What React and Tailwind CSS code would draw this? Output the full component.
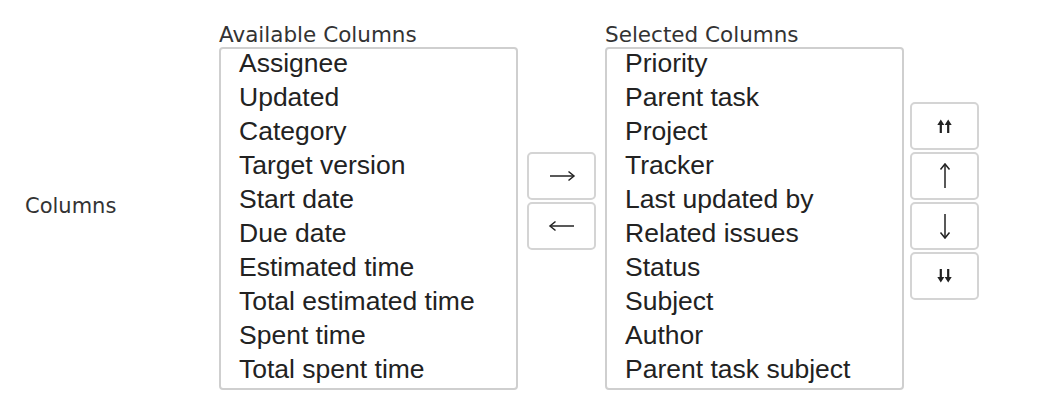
import {useState} from "react";

const available = [
    "Assignee",
    "Updated",
    "Category",
    "Target version",
    "Start date",
    "Due date",
    "Estimated time",
    "Total estimated time",
    "Spent time",
    "Total spent time",
];

const selected = [
    "Priority",
    "Parent task",
    "Project",
    "Tracker",
    "Last updated by",
    "Related issues",
    "Status",
    "Subject",
    "Author",
    "Parent task subject",
];

// thin arrow with an open chevron head, pointing right; rotated for other directions
const Arrow = ({rotate = 0}) => (
    <svg width="28" height="28" viewBox="0 0 28 28" style={{transform: `rotate(${rotate}deg)`}}>
        <path d="M2 14H26" stroke="#222" strokeWidth="1.5" fill="none" />
        <path d="M20.5 9.5L26 14L20.5 18.5" stroke="#222" strokeWidth="1.5" fill="none" />
    </svg>
);

// small bold double arrow (⇈), flipped for ⇊
const DoubleArrow = ({down}) => (
    <svg width="15" height="14" viewBox="0 0 15 14" style={{transform: down ? "rotate(180deg)" : undefined}}>
        <path d="M3.8 4V14M11.2 4V14" stroke="#222" strokeWidth="2.2" fill="none" />
        <path d="M0.3 6L3.8 0.5L7.3 6ZM7.7 6L11.2 0.5L14.7 6Z" fill="#222" />
    </svg>
);

const ListBox = ({title, items}) => (
    <div className="flex flex-col">
        <span className="text-[21.5px] leading-[25px] text-[#333] font-[family-name:DejaVu_Sans,Verdana,sans-serif]">
            {title}
        </span>
        <div className="w-[299px] h-[343px] border-2 border-[#cfcfcf] rounded-[4px] bg-white overflow-hidden">
            {items.map((item) => (
                <div
                    key={item}
                    className="pl-[18px] h-[34px] leading-[28px] text-[26.5px] text-[#222] font-[family-name:Liberation_Sans,Arial,sans-serif] whitespace-nowrap"
                >
                    {item}
                </div>
            ))}
        </div>
    </div>
);

const ArrowButton = ({children}) => (
    <button className="w-[69px] h-[48px] border-2 border-[#d4d4d4] rounded-[5px] bg-white flex items-center justify-center">
        {children}
    </button>
);

export default function App() {
    const [cols] = useState({available, selected});

    return (
        <div className="w-[1044px] h-[404px] bg-white relative overflow-hidden">
            <div className="flex items-center pt-[22px] pb-[15px]">
                <div className="w-[219px] pl-[25px] pt-[2px] text-[21px] text-[#333] font-[family-name:DejaVu_Sans,Verdana,sans-serif]">
                    Columns
                </div>
                <ListBox title="Available Columns" items={cols.available} />
                <div className="flex flex-col gap-[2px] mx-[9px] mt-[-10px]">
                    <ArrowButton><Arrow /></ArrowButton>
                    <ArrowButton><Arrow rotate={180} /></ArrowButton>
                </div>
                <ListBox title="Selected Columns" items={cols.selected} />
                <div className="flex flex-col gap-[2px] ml-[6px] mt-[-10px]">
                    <ArrowButton><DoubleArrow /></ArrowButton>
                    <ArrowButton><Arrow rotate={-90} /></ArrowButton>
                    <ArrowButton><Arrow rotate={90} /></ArrowButton>
                    <ArrowButton><DoubleArrow down /></ArrowButton>
                </div>
            </div>
        </div>
    );
}
